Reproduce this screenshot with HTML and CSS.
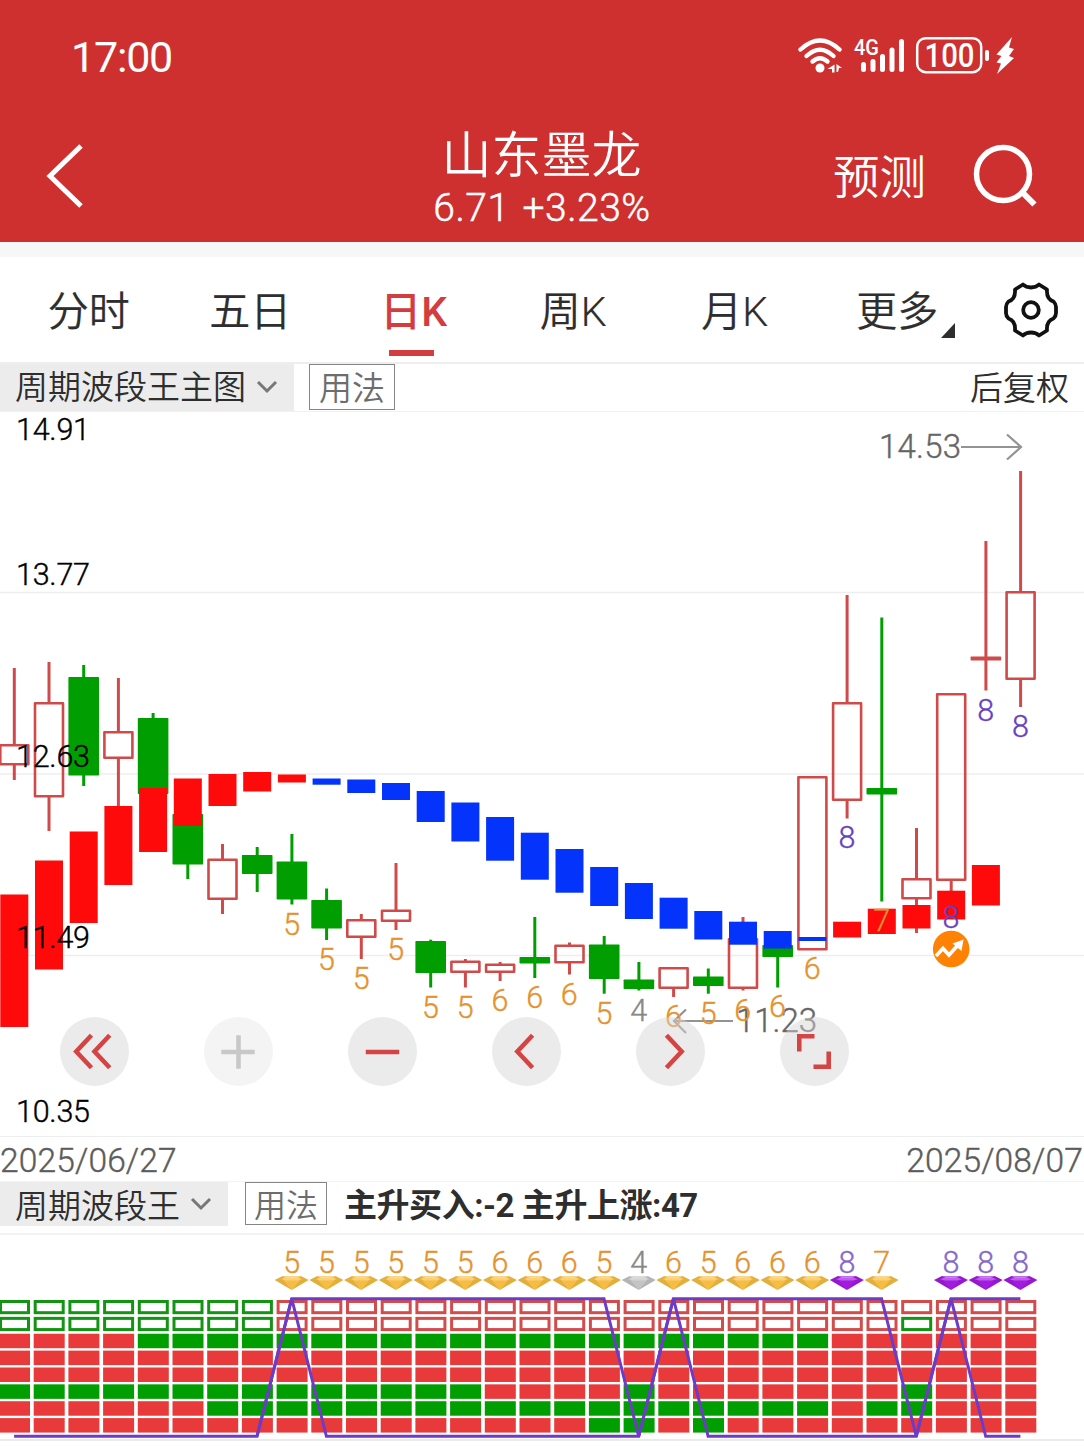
FILE: index.html
```html
<!DOCTYPE html>
<html lang="zh-CN">
<head>
<meta charset="utf-8">
<title>山东墨龙</title>
<link rel="stylesheet" href="styles.css">
</head>
<body>
<header class="header">
  <div class="status">
    <span class="clock">17:00</span>
    <svg class="status-icons" width="220" height="44" viewBox="796 34 220 44">
      <g fill="none" stroke="#fff" stroke-width="4.400" stroke-linecap="round">
        <path d="M800.500 49.500Q820 31.500 839.500 49.500"/>
        <path d="M806.500 56Q820 43.500 833.500 56"/>
        <path d="M812.500 61.500Q820 55 827.500 61.500"/>
      </g>
      <circle cx="820" cy="68" r="4.500" fill="#fff"/>
      <path d="M834.500 64.500v8h-2.500v-3.500h-4.500zM836.500 64l5.500 4h-3l-1 4h-1.500z" fill="#fff"/>
      <text class="net" x="854" y="55" textLength="25" lengthAdjust="spacingAndGlyphs">4G</text>
      <g stroke="#fff" stroke-width="5" stroke-linecap="round">
        <path d="M863.500 64.500v5M873 61.500v8M882.500 56.500v13M892 50v19.500M901.500 41.500v28"/>
      </g>
      <rect x="917.200" y="38.200" width="64" height="34" rx="8.500" fill="none" stroke="#fff" stroke-width="2.500"/>
      <text class="level" x="924.500" y="67" textLength="50" lengthAdjust="spacingAndGlyphs">100</text>
      <rect x="985" y="50" width="4" height="11" rx="2" fill="#fff"/>
      <path d="M1012 37L996.500 54.500l5 1.500-5 6.500 4.500 1-4 10.500L1014 58l-5-2 5-7-5-1.500z" fill="#fff"/>
    </svg>
  </div>
  <div class="nav">
    <svg class="back" width="40" height="64" viewBox="0 0 40 64"><path d="M36 2L5 32l31 30" fill="none" stroke="#fff" stroke-width="5"/></svg>
    <div class="stock">
      <h1 class="stock-name">山东墨龙</h1>
      <div class="quote">6.71 <span class="change">+3.23%</span></div>
    </div>
    <div class="actions">
      <span class="predict">预测</span>
      <svg class="search" width="66" height="66" viewBox="0 0 66 66"><circle cx="31" cy="31" r="26.500" fill="none" stroke="#fff" stroke-width="5.500"/><path d="M49 48l13.500 13.500" stroke="#fff" stroke-width="6"/></svg>
    </div>
  </div>
</header>

<nav class="tabs">
  <span class="tab">分时</span>
  <span class="tab">五日</span>
  <span class="tab active">日K</span>
  <span class="tab">周K</span>
  <span class="tab">月K</span>
  <span class="tab more">更多</span>
  <svg class="gear" width="56" height="56" viewBox="-28 -28 56 56" fill="none" stroke="#111" stroke-width="3.800" stroke-linejoin="round">
    <path d="M-8-25.500C-4-21.500 4-21.500 8-25.500L16-20.500C15.500-14 18-10 22.500-8.500Q25-6 25-3V3Q25 6 22.500 8.500C18 10 15.500 14 16 20.500L8 25.500C4 21.500-4 21.500-8 25.500L-16 20.500C-15.500 14-18 10-22.500 8.500Q-25 6-25 3V-3Q-25-6-22.500-8.500C-18-10-15.500-14-16-20.500Z"/>
    <circle r="7.800"/>
  </svg>
</nav>

<div class="toolbar main-tools">
  <div class="picker">周期波段王主图<svg class="chevron" width="22" height="16" viewBox="0 0 22 16"><path d="M2 3l9 9 9-9"/></svg></div>
  <span class="usage">用法</span>
  <span class="adjust">后复权</span>
</div>

<section class="chart">
  <svg id="candles" width="1084" height="724" viewBox="0 412 1084 724"></svg>
  <div class="controls">
    <button class="ctl"><svg viewBox="0 0 68 68"><path d="M31 18L16 34l15 16M49 18L34 34l15 16"/></svg></button>
    <button class="ctl off"><svg viewBox="0 0 68 68"><path d="M17 34.500h33M34 18v33"/></svg></button>
    <button class="ctl"><svg viewBox="0 0 68 68"><path d="M17.500 34.500h33"/></svg></button>
    <button class="ctl"><svg viewBox="0 0 68 68"><path d="M40 18L25 34l15 16"/></svg></button>
    <button class="ctl"><svg viewBox="0 0 68 68"><path d="M30 18l15 16-15 16"/></svg></button>
    <button class="ctl"><svg viewBox="0 0 68 68"><path d="M19 34V19h15M48 34v15H33"/></svg></button>
  </div>
</section>

<div class="dates"><span>2025/06/27</span><span>2025/08/07</span></div>

<div class="toolbar sub-tools">
  <div class="picker">周期波段王<svg class="chevron" width="22" height="16" viewBox="0 0 22 16"><path d="M2 3l9 9 9-9"/></svg></div>
  <span class="usage">用法</span>
  <span class="signal">主升买入:-2 主升上涨:47</span>
</div>

<section class="matrix">
  <svg id="matrix" width="1084" height="204" viewBox="0 1235 1084 204">
    <defs>
      <g id="gem">
        <path d="M-17 4L-9 0H9L17 4 0 14z"/>
        <path d="M-9 0H9L5 2H-5z" fill="#fff" opacity=".35"/>
        <path d="M-17 4L-9 0-8 4.500 0 14zM17 4L9 0 8 4.500 0 14z" fill="#000" opacity=".08"/>
        <path d="M-11 3.300L-6 1.500H6L11 3.300 6 4.500H-6z" fill="#fff" opacity=".3"/>
      </g>
    </defs>
  </svg>
</section>
<script src="chart.js"></script>
</body>
</html>
```
FILE: chart.js
```js
const NS = 'http://www.w3.org/2000/svg';
const RED = '#d04a4a', GREEN = '#009e00';
const colX = i => 14.1 + 34.7 * i;

function add(parent, name, attrs, text) {
  const el = document.createElementNS(NS, name);
  for (const k in attrs) el.setAttribute(k, attrs[k]);
  if (text !== undefined) el.textContent = text;
  parent.appendChild(el);
  return el;
}

// [direction, wick top, body top, body bottom, wick bottom]
const candles = [
  ['r', 668, 744, 765.5, 780], ['r', 662, 702, 797.5, 831], ['g', 665, 677, 775.5, 786],
  ['r', 678, 731, 759, 810], ['g', 713, 718, 794, 794], ['g', 814, 814, 864.5, 879],
  ['r', 844, 858.5, 900, 914], ['g', 847, 855, 874, 892], ['g', 834, 861.5, 899.5, 904.5],
  ['g', 888.5, 900, 928.5, 940], ['r', 914, 919, 938, 959], ['r', 863, 909.5, 922, 930],
  ['g', 939.7, 941, 973, 987.5], ['r', 959, 960.5, 973, 987.5], ['r', 962, 963.5, 973, 981],
  ['g', 917, 957, 963.5, 978], ['r', 942.5, 944.5, 963.5, 974.5], ['g', 936, 944.5, 979, 993.7],
  ['g', 962, 979.5, 989, 990.5], ['r', 967, 967, 989, 997], ['g', 968.5, 976.5, 986, 993.7],
  ['r', 917, 938, 989, 990.5], ['g', 945, 945, 957, 987.5], ['r', 776, 776, 950.5, 950.5],
  ['r', 595, 702, 801, 818.5], ['g', 617.5, 788, 794.5, 901.5], ['r', 828, 878, 899.5, 933],
  ['r', 693, 693, 881, 900], ['r', 541, 656.5, 660.5, 690.5], ['r', 471, 591, 680, 707]
];

// Trend band: top and bottom per column
const band = [
  [894.5, 1027], [860.5, 969.5], [831.5, 923], [806, 885], [788, 852], [778.5, 826],
  [774, 806], [772, 791.5], [774.5, 782.5], [778.5, 784.7], [779.5, 793], [783, 800],
  [791, 822], [802.5, 841.5], [817, 860.7], [832.7, 879.7], [849, 892.7], [867, 906],
  [883, 919], [897.7, 928.7], [911, 939.5], [921.7, 944.7], [931, 948.5], [937, 941],
  [921.7, 937.5], [908.7, 934], [905, 928.5], [890.7, 919.5], [865, 905.5]
];

// [column, score, baseline]
const scores = [
  [8, 5, 935], [9, 5, 970], [10, 5, 989], [11, 5, 960], [12, 5, 1017.5], [13, 5, 1017.5],
  [14, 6, 1010.7], [15, 6, 1008], [16, 6, 1005], [17, 5, 1024], [18, 4, 1021], [19, 6, 1026.7],
  [20, 5, 1023.5], [21, 6, 1020.7], [22, 6, 1016.7], [23, 6, 979], [24, 8, 847.7],
  [25, 7, 930.7], [27, 8, 927.5], [28, 8, 720.7], [29, 8, 736.5]
];
const scoreClass = n => n === 8 ? 'high' : n === 4 ? 'low' : 'mid';

const main = document.getElementById('candles');
for (const y of [592.5, 774, 955.5])
  add(main, 'path', { d: `M0 ${y}H1084`, stroke: '#eee', 'stroke-width': 1.5 });

candles.forEach(([dir, wt, bt, bb, wb], i) => {
  const x = colX(i) + .2, c = dir === 'r' ? RED : GREEN;
  if (wt < bt) add(main, 'path', { d: `M${x} ${wt}V${bt + 1}`, stroke: c, 'stroke-width': 3 });
  if (wb > bb) add(main, 'path', { d: `M${x} ${bb - 1}V${wb}`, stroke: c, 'stroke-width': 3 });
  if (dir === 'g' || bb - bt < 5)
    add(main, 'rect', { x: x - 15.3, y: bt, width: 30.6, height: bb - bt, fill: c, rx: .7 });
  else
    add(main, 'rect', { x: x - 14, y: bt + 1.3, width: 28, height: bb - bt - 2.6, fill: 'none', stroke: c, 'stroke-width': 2.6, 'stroke-linejoin': 'round' });
});

band.forEach(([t, b], i) => {
  const blue = i >= 9 && i <= 23;
  add(main, 'rect', { x: colX(i) - 13.8, y: t, width: 28, height: b - t, fill: blue ? '#0433fb' : '#fe0a0a' });
});

for (const [label, y] of [['14.91', 440], ['13.77', 585], ['12.63', 767], ['11.49', 948], ['10.35', 1122]])
  add(main, 'text', { x: 16, y, class: 'axis', textLength: 74, lengthAdjust: 'spacing' }, label);

add(main, 'text', { x: 879, y: 458, class: 'mark', textLength: 82 }, '14.53');
add(main, 'path', { d: 'M961 447H1021M1007 434.500L1021 447L1007 459.500', class: 'pointer' });
add(main, 'text', { x: 736, y: 1032, class: 'mark', textLength: 81 }, '11.23');
add(main, 'path', { d: 'M733 1021H675M686 1009.500L674 1021L686 1033', class: 'pointer' });

for (const [i, n, y] of scores)
  add(main, 'text', { x: colX(i), y, class: 'score ' + scoreClass(n) }, n);

add(main, 'circle', { cx: 951.2, cy: 949, r: 18.3, fill: '#ff8205' });
add(main, 'path', { d: 'M936 956L943 948.500 949 955 959 944', fill: 'none', stroke: '#fff', 'stroke-width': 3.6 });
add(main, 'path', { d: 'M952.500 943.500L963.500 939.500 961.500 951Z', fill: '#fff' });

// Indicator matrix, one string per row
const grid = document.getElementById('matrix');
const rows = [
  'GGGGGGGGRRRRRRRRRRRRRRRRRRRRRR',
  'GGGGGGGGRRRRRRRRRRRRRRRRRRGRRR',
  'RRRRGGGGGGGGGGGGGGGGGGGGRRRRRR',
  'RRRRRRRRRRRRRRRRRRRRRRRRRRRRRR',
  'RRRRRRRRRRRRRRRRRRRRRRRRRRRRRR',
  'GGGGGGGGGGGGGGRRRRGRRRRRRRGRRR',
  'RRRRRRGGGGGGGGGGGGGGGGGGRGGRRR',
  'RRRRRRRRRRRRRRRRRGGRGRRRRRRRRR'
];
rows.forEach((row, r) => [...row].forEach((c, i) => {
  const x = colX(i) - 15.1, y = 1300 + 16.87 * r;
  if (r < 2)
    add(grid, 'rect', { x: x + 1.5, y: y + 1.5, width: 28, height: 11.2, fill: '#fff', stroke: c === 'R' ? '#d34c4c' : '#139413', 'stroke-width': 3 });
  else
    add(grid, 'rect', { x, y, width: 31, height: 14.5, fill: c === 'R' ? '#e83a3a' : '#009e00' });
}));

const TOP = 1298.7, BOTTOM = 1436.3;
const line = (from, levels) => add(grid, 'polyline', {
  points: [...levels].map((l, k) => `${colX(from + k)},${l === '1' ? TOP : BOTTOM}`).join(' '),
  class: 'trend'
});
line(0, '000000001000000000010000000100');
line(7, '01111111111011111110111');

const gemColor = { high: '#a31be0', low: '#c4c4c4', mid: '#f6bd42' };
for (const [i, n] of scores) {
  const k = scoreClass(n);
  add(grid, 'text', { x: colX(i), y: 1273, class: `score ${k} faded` }, n);
  add(grid, 'use', { href: '#gem', x: colX(i), y: 1276, fill: gemColor[k] });
}
```
FILE: styles.css
```css
* { box-sizing: border-box; }
body {
  margin: 0;
  width: 1084px;
  height: 1450px;
  overflow: hidden;
  background: #fff;
  color: #2e2e2e;
  font-family: Roboto, "Noto Sans CJK SC", sans-serif;
}
svg { display: block; flex: none; }

.header { height: 242px; background: #ce3030; color: #fff; }
.status { height: 112px; padding: 0 68px 0 71px; display: flex; justify-content: space-between; align-items: center; }
.clock { font-size: 43px; letter-spacing: -1.2px; padding-top: 2px; }
.status-icons { fill: #fff; }
.net { font-size: 22px; font-weight: 500; }
.level { font-size: 34px; font-weight: 500; }

.nav { height: 130px; padding: 0 45px; display: grid; grid-template-columns: 1fr auto 1fr; }
.back { margin-top: 32px; }
.stock { width: 222px; text-align: center; }
.stock-name { margin: 13px 0 0 -1px; font-size: 50px; line-height: 62px; font-weight: 350; white-space: nowrap; }
.quote { margin-top: -2px; font-size: 39px; line-height: 46px; font-weight: 350; letter-spacing: .5px; white-space: nowrap; -webkit-text-stroke: .5px #fff; }
.change { margin-left: 3px; }
.actions { display: flex; justify-content: flex-end; gap: 46px; }
.predict { margin-top: 32px; font-size: 46.500px; line-height: 68px; font-weight: 350; }
.search { margin-top: 31px; margin-right: 1px; }

.tabs {
  height: 122px;
  padding: 0 0 0 8px;
  border-top: 15px solid #f7f7f7;
  border-bottom: 2px solid #eee;
  display: grid;
  grid-template-columns: repeat(6, 161.500px) 107px;
  align-items: stretch;
}
.tab { position: relative; text-align: center; font-size: 41px; line-height: 110px; font-weight: 350; -webkit-text-stroke: .2px currentColor; }
.tab.active { color: #d43d3f; font-weight: 500; text-indent: 4px; -webkit-text-stroke: 0; }
.tab.active::after { content: ""; position: absolute; left: 58px; top: 93px; width: 45px; height: 6px; background: #d43d3f; }
.more { text-indent: 2px; }
.more::after { content: ""; position: absolute; left: 125px; top: 66px; border-left: 14px solid transparent; border-bottom: 15px solid #2e2e2e; }
.gear { align-self: center; justify-self: center; margin: -5px 0 0 1px; }

.toolbar { display: flex; font-size: 33px; font-weight: 350; }
.picker { display: flex; align-items: center; gap: 10px; padding: 0 16px 0 15px; background: #ececec; white-space: nowrap; }
.chevron { fill: none; stroke: #777; stroke-width: 3; }
.usage { border: 1.500px solid #858585; color: #6d6d6d; text-align: center; }
.main-tools { height: 48px; border-bottom: 1px solid #f0f0f0; }
.main-tools .picker { width: 294px; line-height: 43px; padding-bottom: 1px; }
.main-tools .usage { width: 86px; height: 46px; margin-left: 15px; line-height: 47px; }
.adjust { margin-left: auto; padding-right: 15px; line-height: 49px; }

.chart { position: relative; height: 725px; border-bottom: 1px solid #eee; }
.axis { font-size: 30.500px; fill: #000; font-weight: 350; stroke: #000; stroke-width: .4px; }
.mark { font-size: 33px; fill: #666; font-weight: 350; stroke: #666; stroke-width: .4px; }
.pointer { fill: none; stroke: #939393; stroke-width: 2.200; }
.score { font-size: 30.500px; font-weight: 350; text-anchor: middle; stroke-width: .4px; }
.mid { fill: #e5922f; }
text.mid { stroke: #e5922f; }
.high { fill: #6740be; }
text.high { stroke: #6740be; }
.low { fill: #888; }
text.low { stroke: #888; }
text.high.faded { fill: #8368ca; stroke: #8368ca; }

.controls { position: absolute; left: 60px; top: 605px; display: flex; gap: 75px; }
.ctl { width: 69px; height: 69px; padding: 0; border: 0; border-radius: 50%; background: rgba(213, 213, 213, .48); }
.ctl svg { width: 69px; height: 69px; fill: none; stroke: #d54444; stroke-width: 4.500; }
.ctl.off { background: #f4f4f4; }
.ctl.off svg { stroke: #c8c8c8; }

.dates { height: 45px; border-bottom: 1px solid #f3f3f3; display: flex; justify-content: space-between; padding: 0 1px 0 0; font-size: 33.500px; line-height: 47px; font-weight: 350; color: #5c5c5c; letter-spacing: .15px; -webkit-text-stroke: .4px #5c5c5c; }

.sub-tools { height: 53px; padding-bottom: 8px; border-bottom: 2px solid #f3f3f3; }
.sub-tools .picker { width: 228px; height: 44px; }
.sub-tools .usage { width: 82px; height: 43px; margin-left: 17px; line-height: 46px; font-size: 32px; }
.signal { margin-left: 17px; line-height: 47px; font-weight: 700; white-space: nowrap; letter-spacing: -.45px; }

.matrix { height: 206px; border-bottom: 2px solid #ebebeb; }
.trend { fill: none; stroke: #6d3cc6; stroke-width: 3; }
```
